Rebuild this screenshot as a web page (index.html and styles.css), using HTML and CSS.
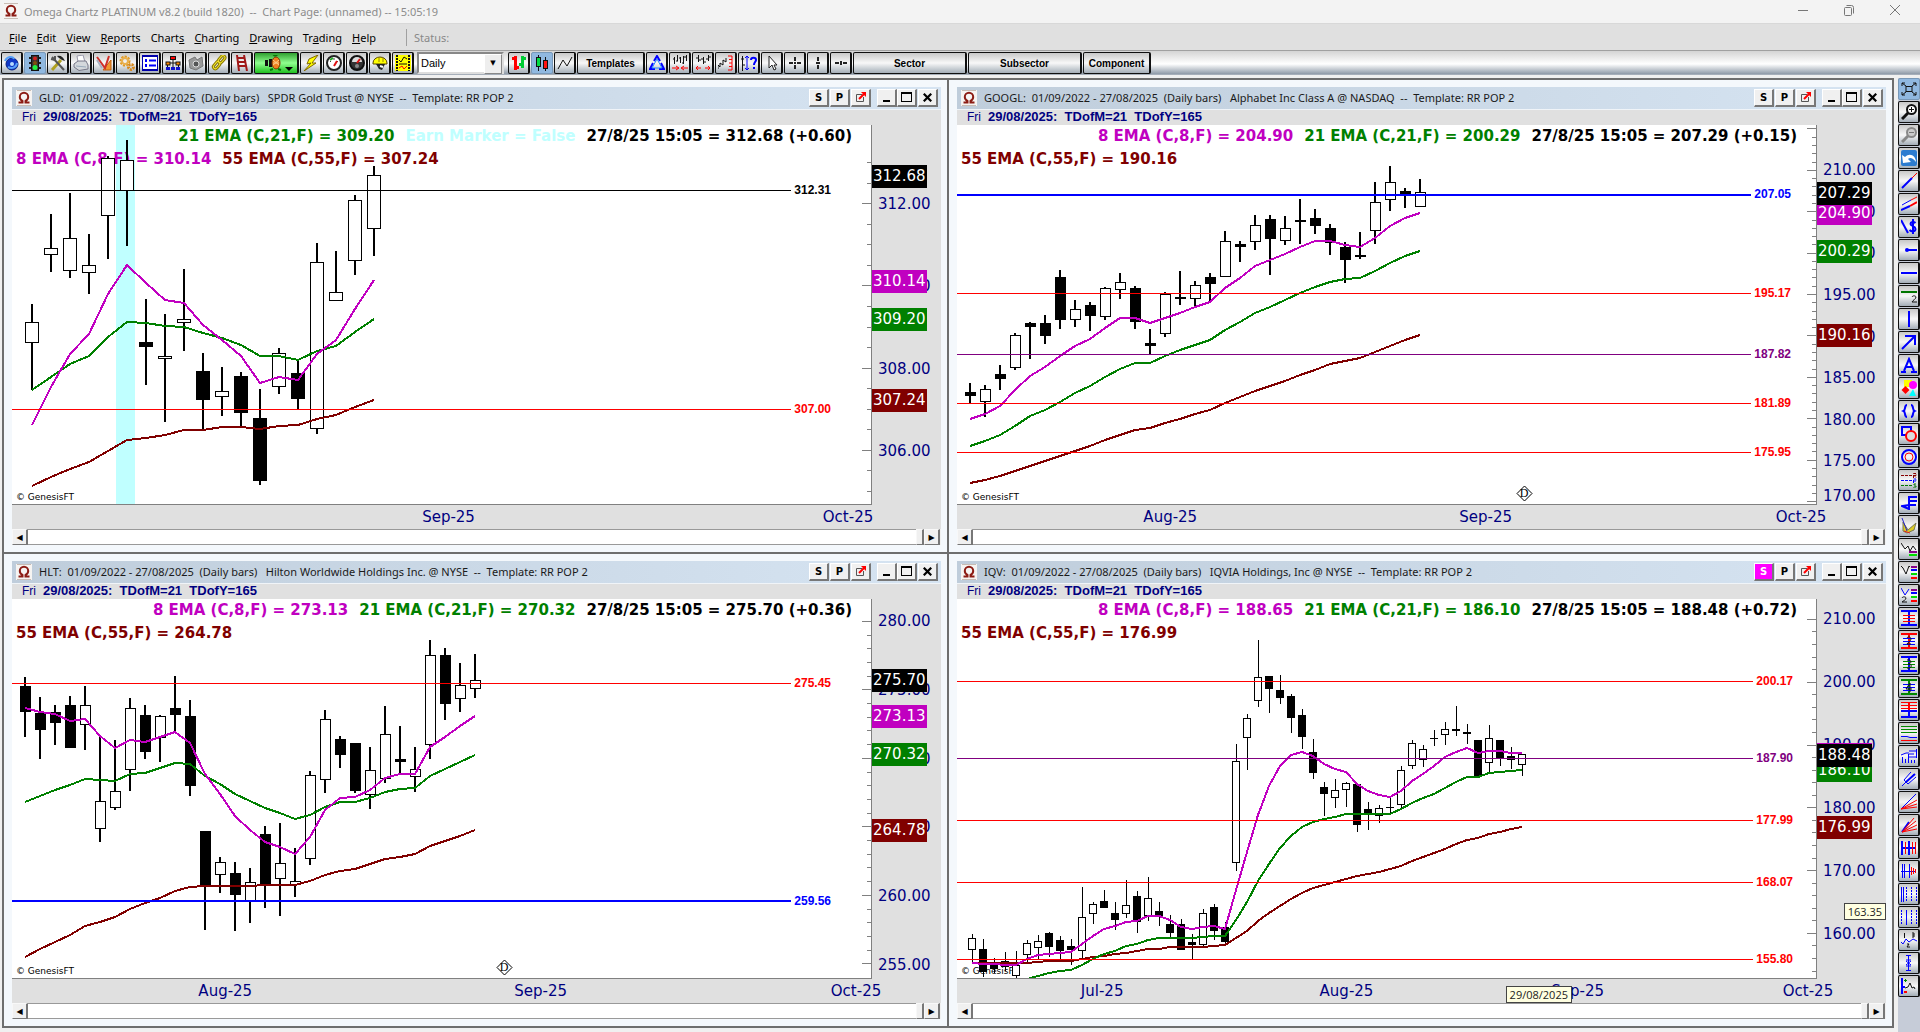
FILE: index.html
```html
<!DOCTYPE html>
<html lang="en">
<head>
    <meta charset="UTF-8">
    <meta name="viewport" content="width=device-width, initial-scale=1.0">
    <title>Omega Chartz PLATINUM</title>
    <link rel="stylesheet" href="styles.css">
</head>
<body>
    <svg class="defs" aria-hidden="true">
        <symbol id="omega" viewBox="0 0 16 16">
            <rect width="16" height="16" fill="#f6f4f2"/>
            <path d="M1 .5h14M1 15.500h14" stroke="#c8bcb4"/>
            <path d="M2.500 12.500h4v-1.500C4.500 10 3.800 8.500 3.800 7a4.200 4.200 0 0 1 8.400 0c0 1.500-.7 3-2.700 4v1.500h4" fill="none" stroke="#8c1c14" stroke-width="2"/>
        </symbol>
        <symbol id="popout" viewBox="0 0 12 12">
            <path d="M7 3.500H1.500v7h7V6" fill="none" stroke="#555"/>
            <path d="M4 8l5-5" stroke="#f00" stroke-width="2"/>
            <path d="M6 1h5v5z" fill="#f00"/>
        </symbol>
    </svg>

    <header class="app-title">
        <svg class="app-icon"><use href="#omega"/></svg>
        <h1>Omega Chartz PLATINUM v8.2 (build 1820)  --  Chart Page: (unnamed) -- 15:05:19</h1>
        <div class="window-buttons">
            <button aria-label="Minimize"><svg viewBox="0 0 12 12"><path d="M1 6.500h10"/></svg></button>
            <button aria-label="Restore"><svg viewBox="0 0 12 12"><rect x="1.500" y="3.500" width="7" height="8" rx="1"/><path d="M3.500 1.500h5a2 2 0 0 1 2 2v6"/></svg></button>
            <button aria-label="Close"><svg viewBox="0 0 12 12"><path d="M1 1l10 10M11 1L1 11"/></svg></button>
        </div>
    </header>

    <nav class="menu">
        <button><u>F</u>ile</button>
        <button><u>E</u>dit</button>
        <button><u>V</u>iew</button>
        <button><u>R</u>eports</button>
        <button>Chart<u>s</u></button>
        <button><u>C</u>harting</button>
        <button><u>D</u>rawing</button>
        <button>Tr<u>a</u>ding</button>
        <button><u>H</u>elp</button>
        <span class="status">Status:</span>
    </nav>

    <div class="toolbar">
        <button class="tool" aria-label="Phone"><svg viewBox="0 0 16 16"><circle cx="8" cy="9" r="6" fill="#1038c8" stroke="#0a2080" stroke-width="1"/><path d="M1 6c2-5 8-5 9-2M4 12c4 2 8 1 9-4" stroke="#58a0f8"/><circle cx="8" cy="9" r="2" fill="#b8dcff" stroke="none"/></svg></button>
        <button class="tool active" aria-label="Traffic light"><svg viewBox="0 0 16 16"><path d="M2 3h12M2 8h12M2 13h12" stroke="#222"/><rect x="4.500" y=".5" width="7" height="15" fill="#333" stroke="#111" stroke-width="1"/><circle cx="8" cy="3.500" r="2" fill="#d02020" stroke="none"/><circle cx="8" cy="8" r="2" fill="#805010" stroke="none"/><circle cx="8" cy="12.500" r="2.500" fill="#20f040" stroke="none"/></svg></button>
        <button class="tool" aria-label="Tools"><svg viewBox="0 0 16 16"><path d="M2 15L11 5" stroke="#b0a020" stroke-width="3"/><path d="M7 1c4-1 6 1 8 5l-3-1-3-2z" fill="#222" stroke="none"/><path d="M2 2l12 13" stroke="#555"/><path d="M1 4l4 1V1" stroke="#555"/></svg></button>
        <button class="tool" aria-label="Print"><svg viewBox="0 0 16 16"><path d="M4 1l6-1 2 7H5z" fill="#fff" stroke="#99a" stroke-width="1"/><path d="M1 9l4-3h8l2 4v4l-9 1.500L1 12z" fill="#d4d8dc" stroke="#778" stroke-width="1"/><path d="M3 11l10 1" stroke="#9ab" stroke-width="1"/></svg></button>
        <button class="tool" aria-label="Drawing tools"><svg viewBox="0 0 16 16"><path d="M7 15l8-10v10z" fill="#f09830" stroke="#c06010" stroke-width="1"/><path d="M1 2l8 11L13 1" stroke="#d03028" stroke-width="2"/><path d="M1 5l5 8" stroke="#a8b0c0"/></svg></button>
        <button class="tool" aria-label="Settings"><svg viewBox="0 0 16 16"><circle cx="6" cy="6" r="4" stroke="#e09820" stroke-width="3" stroke-dasharray="2 1"/><circle cx="6" cy="6" r="3" stroke="#e8b050"/><circle cx="12" cy="12" r="2.500" stroke="#d88818" stroke-width="3" stroke-dasharray="2 1"/></svg></button>
        <button class="tool" aria-label="List"><svg viewBox="0 0 16 16"><rect x="0" y="1" width="16" height="14" fill="#fff" stroke="#00a" stroke-width="2"/><path d="M7 5.500h7M7 10.500h7"/><path d="M3 5.500h2M3 10.500h2" stroke-width="3"/></svg></button>
        <button class="tool" aria-label="Tree"><svg viewBox="0 0 16 16"><path d="M8 4v4M2.500 12V8h11v4M8 8v4" stroke="#111" stroke-width="1"/><rect x="5.500" y="1.500" width="5" height="3" fill="#f00" stroke="#111" stroke-width="1"/><rect x="1" y="7" width="4" height="3" fill="#f80" stroke="#111" stroke-width="1"/><rect x="11" y="7" width="4" height="3" fill="#f80" stroke="#111" stroke-width="1"/><path d="M1 13.500h4M6 13.500h4M11 13.500h4" stroke="#11c" stroke-width="3"/></svg></button>
        <button class="tool" aria-label="Camera"><svg viewBox="0 0 16 16"><path d="M1 5l6-3 2 3 5-3 1 9-7 4-6-2z" fill="#999" stroke="#777" stroke-width="1"/><circle cx="8" cy="9" r="3" fill="#555" stroke="#ddd" stroke-width="1"/></svg></button>
        <button class="tool" aria-label="Link"><svg viewBox="0 0 16 16"><rect x="-3" y="-2" width="8" height="4" rx="2" transform="translate(5 11) rotate(-50)" stroke="#887800" stroke-width="3"/><rect x="-3" y="-2" width="8" height="4" rx="2" transform="translate(10 5) rotate(-50)" stroke="#887800" stroke-width="3"/><rect x="-3" y="-2" width="8" height="4" rx="2" transform="translate(5 11) rotate(-50)" stroke="#f8e830" stroke-width="1"/><rect x="-3" y="-2" width="8" height="4" rx="2" transform="translate(10 5) rotate(-50)" stroke="#f8e830" stroke-width="1"/></svg></button>
        <button class="tool" aria-label="Ladder"><svg viewBox="0 0 16 16"><path d="M3 0l2 16M10 0l3 16M3 3h7M4 7h7M4 11h8" stroke="#a01818"/></svg></button>
        <button class="tool go" aria-label="Run"><svg viewBox="0 0 34 16"><rect x="6" y="5" width="3" height="6" fill="#111" stroke="none"/><rect x="10" y="4" width="3" height="8" fill="#111" stroke="none"/><path d="M16 1l-2-2M16 1l3-2M14 14l-3 1M19 14l3 1" stroke="#067806"/><ellipse cx="17" cy="8" rx="4" ry="6" fill="#f08020" stroke="#803000" stroke-width="1"/><path d="M14 5l6 5M14 10l6-5M14 8h6" stroke="#fc8" stroke-width="1"/><path d="M26 12h8l-4 4z" fill="#000" stroke="none"/></svg></button>
        <button class="tool" aria-label="Lightning"><svg viewBox="0 0 16 16"><path d="M15 0L6 4 4 9l4-1-7 8L13 8 9 8z" fill="#ff0" stroke="#806800" stroke-width="1"/></svg></button>
        <button class="tool" aria-label="Gauge"><svg viewBox="0 0 16 16"><circle cx="8" cy="8" r="7" fill="#fff" stroke="#222"/><path d="M4 6l1 1M8 3v2M12 6l-1 1" stroke="#444" stroke-width="1"/><path d="M8 11l3-5" stroke="#e01010"/><path d="M4 5l3-2" stroke="#2a2"/></svg></button>
        <button class="tool" aria-label="Dark gauge"><svg viewBox="0 0 16 16"><circle cx="8" cy="8" r="7" fill="#333" stroke="#111"/><path d="M3 7a5 5 0 0 1 10 0z" fill="#ddd" stroke="none"/><path d="M8 8l3-4" stroke="#e01010"/><circle cx="8" cy="11" r="2" fill="#888" stroke="none"/></svg></button>
        <button class="tool" aria-label="Helmet"><svg viewBox="0 0 16 16"><path d="M1 8a7 6 0 0 1 14 0v1H1z" fill="#ff0" stroke="#554400" stroke-width="1"/><path d="M7 2v5M11 3v4" stroke="#998800" stroke-width="1"/><path d="M4 9h9l-3 6-3-1z" fill="#222" stroke="none"/><path d="M8 11l3 1" stroke="#fff"/></svg></button>
        <button class="tool" aria-label="Film"><svg viewBox="0 0 16 16"><rect width="16" height="16" fill="#ff0" stroke="none"/><path d="M2 0v16M14 0v16" stroke="#111" stroke-dasharray="2 1"/><path d="M4 5l2 2 3-5 3 2M4 9h8" stroke="#111" stroke-width="1"/><path d="M4 13l3-2 2 3 3-3" stroke="#f00" stroke-width="1"/></svg></button>
        <label class="period"><select aria-label="Bar period"><option>Daily</option><option>Weekly</option><option>Monthly</option></select></label>
        <button class="tool" aria-label="OHLC bars"><svg viewBox="0 0 16 16"><path d="M4.500 1v14M1 3.500h3M4 12.500h4" stroke="#f00" stroke-width="3"/><path d="M11.500 1v12M8 9.500h4M11 3.500h4" stroke="#0c3" stroke-width="3"/></svg></button>
        <button class="tool active" aria-label="Candles"><svg viewBox="0 0 16 16"><path d="M4.500 0v16M11.500 2v14" stroke="#111" stroke-width="1"/><rect x="2.500" y="2.500" width="4" height="9" fill="#0d4" stroke="#111" stroke-width="1"/><rect x="9.500" y="5.500" width="4" height="8" fill="#f11" stroke="#111" stroke-width="1"/></svg></button>
        <button class="tool" aria-label="Line chart"><svg viewBox="0 0 16 16"><path d="M1 14l5-9 4 6 5-9" stroke="#111" stroke-width="1"/></svg></button>
        <button class="tool templates">Templates</button>
        <button class="tool" aria-label="Recycle"><svg viewBox="0 0 16 16"><path d="M5 6l3-5 3 5M12 8l3 6h-5M6 14H1l3-6" stroke="#00f" stroke-width="2"/><path d="M8 4L3 13h10z" stroke="#28f" stroke-width="1"/></svg></button>
        <button class="tool" aria-label="Compress bars"><svg viewBox="0 0 16 16"><path d="M2.500 2v7M5.500 0v6M8.500 2v6M11.500 1v8M14.500 0v6M1 4h1M4 6h2M7 3h2M10 8h1M12 2h2" stroke="#111" stroke-width="1"/><path d="M0 13h6M16 13h-6M4 11l3 2-3 2M12 11l-3 2 3 2" stroke="#f00" stroke-width="1"/></svg></button>
        <button class="tool" aria-label="Expand bars"><svg viewBox="0 0 16 16"><path d="M3.500 0v7M8.500 2v7M13.500 0v6M1 3h2M4 5h2M6 4h2M9 7h2M11 4h2M14 2h2" stroke="#111" stroke-width="1"/><path d="M1 13h5M15 13h-5M3 11l-2 2 2 2M13 11l2 2-2 2" stroke="#f00" stroke-width="1"/></svg></button>
        <button class="tool" aria-label="Scale"><svg viewBox="0 0 16 16"><path d="M0 14v-4l2 2V8l3 2V5l3 2V3" stroke="#111" stroke-width="1"/><path d="M10 1h4v14h-4M11 4.500h3M11 8h3M11 11.500h3" stroke="#f00" stroke-width="1"/></svg></button>
        <button class="tool" aria-label="Help with bars"><svg viewBox="0 0 16 16"><path d="M1.500 1v15M0 4h3M1 10h3" stroke="#111" stroke-width="1"/><path d="M6 1v14M4 3l2-2 2 2M4 13l2 2 2-2" stroke-width="1"/><path d="M10 5c0-3 5-3 5 0 0 2-2 2-2 5M13 12v2"/></svg></button>
        <button class="tool" aria-label="Pointer"><svg viewBox="0 0 16 16"><path d="M5 1v12l3-3 2 5 2-1-2-4h3z" fill="#fff" stroke="#222" stroke-width="1"/></svg></button>
        <button class="tool" aria-label="Crosshair"><svg viewBox="0 0 16 16"><path d="M8 2v4M8 10v4M2 8h4M10 8h4" stroke="#222"/><rect x="7" y="7" width="2" height="2" fill="#222" stroke="none"/></svg></button>
        <button class="tool" aria-label="Vertical cursor"><svg viewBox="0 0 16 16"><path d="M8 2v4M8 10v4" stroke="#222"/><rect x="6" y="7" width="4" height="2" fill="#222" stroke="none"/></svg></button>
        <button class="tool" aria-label="Horizontal cursor"><svg viewBox="0 0 16 16"><path d="M2 8h4M10 8h4" stroke="#222"/><rect x="7" y="6" width="2" height="4" fill="#222" stroke="none"/></svg></button>
        <button class="tool sector">Sector</button>
        <button class="tool sector">Subsector</button>
        <button class="tool templates">Component</button>
    </div>

    <div class="desk">
        <main class="workspace">
            <section class="panel">
                <div class="panel-title">
                    <svg class="app-icon"><use href="#omega"/></svg>
                    <h2>GLD:  01/09/2022 - 27/08/2025  (Daily bars)   SPDR Gold Trust @ NYSE  --  Template: RR POP 2</h2>
                    <button>S</button><button>P</button><button aria-label="Pop out"><svg><use href="#popout"/></svg></button>
                    <button class="min" aria-label="Minimize"><i></i></button><button class="max" aria-label="Maximize"><i></i></button><button class="close" aria-label="Close"><svg viewBox="0 0 12 12"><path d="M1 1l10 10M11 1L1 11"/></svg></button>
                </div>
                <div class="panel-info"><span>Fri</span><b>29/08/2025:  TDofM=21  TDofY=165</b></div>
                <div class="chart" id="gld">
                    <div class="plot">
                        <div class="legend">
                            <div class="row first"><span class="ema21">21 EMA (C,21,F) = 309.20</span><span class="earn">Earn Marker = False</span><span>27/8/25 15:05 = 312.68 (+0.60)</span></div>
                            <div class="row"><span class="ema8">8 EMA (C,8,F) = 310.14</span><span class="ema55">55 EMA (C,55,F) = 307.24</span></div>
                        </div>
                        <small>© GenesisFT</small>
                    </div>
                    <div class="axis"></div>
                </div>
                <div class="months"></div>
                <div class="scroll"><button aria-label="Scroll left">◀</button><div class="track"></div><div class="thumb"></div><button aria-label="Scroll right">▶</button></div>
            </section>

            <section class="panel">
                <div class="panel-title">
                    <svg class="app-icon"><use href="#omega"/></svg>
                    <h2>GOOGL:  01/09/2022 - 27/08/2025  (Daily bars)   Alphabet Inc Class A @ NASDAQ  --  Template: RR POP 2</h2>
                    <button>S</button><button>P</button><button aria-label="Pop out"><svg><use href="#popout"/></svg></button>
                    <button class="min" aria-label="Minimize"><i></i></button><button class="max" aria-label="Maximize"><i></i></button><button class="close" aria-label="Close"><svg viewBox="0 0 12 12"><path d="M1 1l10 10M11 1L1 11"/></svg></button>
                </div>
                <div class="panel-info"><span>Fri</span><b>29/08/2025:  TDofM=21  TDofY=165</b></div>
                <div class="chart" id="googl">
                    <div class="plot">
                        <div class="legend">
                            <div class="row first"><span class="ema8">8 EMA (C,8,F) = 204.90</span><span class="ema21">21 EMA (C,21,F) = 200.29</span><span>27/8/25 15:05 = 207.29 (+0.15)</span></div>
                            <div class="row"><span class="ema55">55 EMA (C,55,F) = 190.16</span></div>
                        </div>
                        <small>© GenesisFT</small>
                    </div>
                    <div class="axis"></div>
                </div>
                <div class="months"></div>
                <div class="scroll"><button aria-label="Scroll left">◀</button><div class="track"></div><div class="thumb"></div><button aria-label="Scroll right">▶</button></div>
            </section>

            <section class="panel">
                <div class="panel-title">
                    <svg class="app-icon"><use href="#omega"/></svg>
                    <h2>HLT:  01/09/2022 - 27/08/2025  (Daily bars)   Hilton Worldwide Holdings Inc. @ NYSE  --  Template: RR POP 2</h2>
                    <button>S</button><button>P</button><button aria-label="Pop out"><svg><use href="#popout"/></svg></button>
                    <button class="min" aria-label="Minimize"><i></i></button><button class="max" aria-label="Maximize"><i></i></button><button class="close" aria-label="Close"><svg viewBox="0 0 12 12"><path d="M1 1l10 10M11 1L1 11"/></svg></button>
                </div>
                <div class="panel-info"><span>Fri</span><b>29/08/2025:  TDofM=21  TDofY=165</b></div>
                <div class="chart" id="hlt">
                    <div class="plot">
                        <div class="legend">
                            <div class="row first"><span class="ema8">8 EMA (C,8,F) = 273.13</span><span class="ema21">21 EMA (C,21,F) = 270.32</span><span>27/8/25 15:05 = 275.70 (+0.36)</span></div>
                            <div class="row"><span class="ema55">55 EMA (C,55,F) = 264.78</span></div>
                        </div>
                        <small>© GenesisFT</small>
                    </div>
                    <div class="axis"></div>
                </div>
                <div class="months"></div>
                <div class="scroll"><button aria-label="Scroll left">◀</button><div class="track"></div><div class="thumb"></div><button aria-label="Scroll right">▶</button></div>
            </section>

            <section class="panel">
                <div class="panel-title">
                    <svg class="app-icon"><use href="#omega"/></svg>
                    <h2>IQV:  01/09/2022 - 27/08/2025  (Daily bars)   IQVIA Holdings, Inc @ NYSE  --  Template: RR POP 2</h2>
                    <button class="synced">S</button><button>P</button><button aria-label="Pop out"><svg><use href="#popout"/></svg></button>
                    <button class="min" aria-label="Minimize"><i></i></button><button class="max" aria-label="Maximize"><i></i></button><button class="close" aria-label="Close"><svg viewBox="0 0 12 12"><path d="M1 1l10 10M11 1L1 11"/></svg></button>
                </div>
                <div class="panel-info"><span>Fri</span><b>29/08/2025:  TDofM=21  TDofY=165</b></div>
                <div class="chart" id="iqv">
                    <div class="plot">
                        <div class="legend">
                            <div class="row first"><span class="ema8">8 EMA (C,8,F) = 188.65</span><span class="ema21">21 EMA (C,21,F) = 186.10</span><span>27/8/25 15:05 = 188.48 (+0.72)</span></div>
                            <div class="row"><span class="ema55">55 EMA (C,55,F) = 176.99</span></div>
                        </div>
                        <small>© GenesisFT</small>
                    </div>
                    <div class="axis"></div>
                </div>
                <div class="months"></div>
                <div class="scroll"><button aria-label="Scroll left">◀</button><div class="track"></div><div class="thumb"></div><button aria-label="Scroll right">▶</button></div>
            </section>
        </main>

        <aside class="draw-tools">
            <button class="tool active" aria-label="Fit"><svg viewBox="0 0 16 16"><rect x="5" y="5.500" width="6" height="5" stroke="#111" stroke-width="1"/><path d="M1 5V2h3M12 2h3v3M15 11v3h-3M4 14H1v-3M1 2l4 3M15 2l-4 3M1 14l4-3M15 14l-4-3" stroke="#111" stroke-width="1"/></svg></button>
            <button class="tool" aria-label="Zoom in"><svg viewBox="0 0 16 16"><path d="M1 15l6-6" stroke="#111" stroke-width="3"/><circle cx="10.500" cy="5.500" r="4.500" fill="#fff" stroke="#111"/><path d="M8 5.500h5M10.500 3v5" stroke="#111" stroke-width="1"/></svg></button>
            <button class="tool" aria-label="Zoom out"><svg viewBox="0 0 16 16"><path d="M1 15l6-6" stroke="#888" stroke-width="3"/><circle cx="10.500" cy="5.500" r="4.500" fill="#ccc" stroke="#888"/><path d="M8 5.500h5" stroke="#777" stroke-width="1"/></svg></button>
            <button class="tool" aria-label="Undo zoom"><svg viewBox="0 0 16 16"><rect width="16" height="16" rx="2" fill="#2c7cd0" stroke="none"/><path d="M1 5l1 8 8-1-3-3c2-2 5-1 8 3 0-6-6-10-11-5z" fill="#fff" stroke="none"/></svg></button>
            <button class="tool" aria-label="Trend line"><svg viewBox="0 0 16 16"><path d="M1 15L11 5"/><path d="M11 5l5-5" stroke="#f00" stroke-width="1"/></svg></button>
            <button class="tool" aria-label="Parallel lines"><svg viewBox="0 0 16 16"><path d="M0 14l9-4"/><path d="M9 10l7-4" stroke="#f00"/><path d="M1 9l9-5" stroke-width="1"/><path d="M10 4l6-3" stroke="#f00" stroke-width="1"/></svg></button>
            <button class="tool" aria-label="Dollar line"><svg viewBox="0 0 16 16"><path d="M0 1l7 13"/><path d="M14.500 4c-2-2-5-1-5 1s5 2 5 5-4 3-6 1M12 0v15" stroke-width="2"/></svg></button>
            <button class="tool" aria-label="Ray"><svg viewBox="0 0 16 16"><path d="M5 8h11"/><circle cx="6" cy="8" r="2" fill="#00f" stroke="none"/></svg></button>
            <button class="tool" aria-label="Horizontal line"><svg viewBox="0 0 16 16"><path d="M0 8h16"/></svg></button>
            <button class="tool" aria-label="Second horizontal line"><svg viewBox="0 0 16 16"><path d="M0 4h16" stroke="#070"/><path d="M11 9c1-2 4-1 4 0 0 2-3 3-4 5h5" stroke="#111" stroke-width="1"/></svg></button>
            <button class="tool" aria-label="Vertical line"><svg viewBox="0 0 16 16"><path d="M8 0v16"/></svg></button>
            <button class="tool" aria-label="Arrow"><svg viewBox="0 0 16 16"><path d="M1 15L13 3M4 2h10v9"/></svg></button>
            <button class="tool" aria-label="Text"><svg viewBox="0 0 16 16"><path d="M3 14L8 2l5 12M5 10h6M0 15h5M10 15h6"/></svg></button>
            <button class="tool" aria-label="Shapes"><svg viewBox="0 0 16 16"><rect x="3" y="0" width="8" height="7" fill="#ff0" stroke="none"/><circle cx="12" cy="5" r="4" fill="#f0f" stroke="none"/><path d="M4.500 6l4 4-4 4-4-4z" fill="#f00" stroke="none"/><path d="M12 9l3 7H8z" fill="#0ff" stroke="none"/></svg></button>
            <button class="tool" aria-label="Braces"><svg viewBox="0 0 16 16"><path d="M6 2C3 2 5 7 2.500 8 5 9 3 14 6 14M10 2c3 0 1 5 3.500 6C11 9 13 14 10 14"/></svg></button>
            <button class="tool" aria-label="Square and circle"><svg viewBox="0 0 16 16"><rect x="1" y="1" width="9" height="8"/><circle cx="10" cy="10" r="5" fill="#ddd" stroke="#f00"/></svg></button>
            <button class="tool" aria-label="Circles"><svg viewBox="0 0 16 16"><circle cx="8" cy="8" r="7"/><circle cx="8" cy="8" r="4" stroke="#f00" stroke-width="1"/></svg></button>
            <button class="tool" aria-label="Support and resistance"><svg viewBox="0 0 16 16"><g stroke-width="1"><path d="M0 3.500h11M12.500 6V1.500H15v2h-2l2 2" stroke="#800" stroke-dasharray="3 1"/><path d="M0 8.500h11M12.500 11V7H15v2h-2" stroke-dasharray="3 1"/><path d="M0 13.500h11M15 12h-2v2h2v2h-3" stroke="#070" stroke-dasharray="3 1"/></g></svg></button>
            <button class="tool" aria-label="Steps"><svg viewBox="0 0 16 16"><path d="M8 15V2h8M8 6h8M8 10h7M8 10l-7 1 7 3"/></svg></button>
            <button class="tool" aria-label="Fan"><svg viewBox="0 0 16 16"><path d="M2 4l5 8 8-7-2 7-7 3-4-2z" fill="#dc2" stroke="#775" stroke-width="1"/><path d="M1 0l5 13" stroke="#22c" stroke-width="1"/><path d="M3 13l6 2" stroke="#d22" stroke-width="1"/></svg></button>
            <button class="tool" aria-label="Wave levels 1"><svg viewBox="0 0 16 16"><path d="M0 2l4 6 3-3 2 5 3-5 3 4" stroke="#111" stroke-width="1"/><path d="M8 11h8" stroke="#808"/><path d="M8 14h8" stroke="#0d0"/></svg></button>
            <button class="tool" aria-label="Wave levels 2"><svg viewBox="0 0 16 16"><path d="M0 2l2 2 3 6 3-8 1 1" stroke="#111" stroke-width="1"/><path d="M10 3h6" stroke="#808"/><path d="M10 6h6"/><path d="M10 10h6" stroke="#0d0"/><path d="M10 14h6" stroke="#f00"/></svg></button>
            <button class="tool" aria-label="Wave levels 3"><svg viewBox="0 0 16 16"><path d="M0 1l4 7 4-6" stroke-width="1"/><path d="M1 11c1-2 4-1 4 0 0 2-3 3-4 4h5" stroke="#111" stroke-width="1"/><path d="M10 3h6" stroke="#808"/><path d="M10 6h6"/><path d="M10 10h6" stroke="#0d0"/><path d="M10 14h6" stroke="#f00"/></svg></button>
            <button class="tool" aria-label="Retracement 1"><svg viewBox="0 0 16 16"><path d="M0 1h16M0 15h16M8 1v14"/><path d="M2 5.500h12M2 8.500h12M2 11.500h12" stroke="#f00" stroke-width="1"/></svg></button>
            <button class="tool" aria-label="Retracement 2"><svg viewBox="0 0 16 16"><path d="M0 1h16M0 15h16M8 1v14" stroke="#f00"/><path d="M2 5.500h12M2 8.500h12M2 11.500h12" stroke-width="1"/><path d="M6 5c1-2 4-1 4 1s-3 3-4 5h4" stroke="#111" stroke-width="1"/></svg></button>
            <button class="tool" aria-label="Retracement 3"><svg viewBox="0 0 16 16"><path d="M0 1h16M0 15h16M8 1v14"/><path d="M2 5.500h12M2 8.500h12M2 11.500h12" stroke="#080" stroke-width="1"/><path d="M6 4c5-1 5 4 1 4 5 0 4 5-1 4" stroke="#111" stroke-width="1"/></svg></button>
            <button class="tool" aria-label="Retracement 4"><svg viewBox="0 0 16 16"><path d="M0 1h16M0 15h16M8 1v14" stroke="#080"/><path d="M2 5.500h12M2 8.500h12M2 11.500h12" stroke-width="1"/><path d="M9 13V4L5 10h6" stroke="#111" stroke-width="1"/></svg></button>
            <button class="tool" aria-label="Extension"><svg viewBox="0 0 16 16"><path d="M0 .5h16M0 3.500h16M0 6.500h16" stroke="#f00" stroke-width="1"/><path d="M8 1v8" stroke="#f00"/><path d="M0 9h16M0 15h16M8 9v6"/></svg></button>
            <button class="tool" aria-label="Bands"><svg viewBox="0 0 16 16"><g stroke-width="1"><path d="M0 1.500h16M0 4.500h16M0 7.500h16" stroke="#080"/><path d="M0 11.500h6l3 1h7"/><path d="M0 15.500h16" stroke="#f00"/></g></svg></button>
            <button class="tool" aria-label="Volume profile"><svg viewBox="0 0 16 16"><path d="M1.500 15V9M4.500 15v-4M7.500 15V6M10.500 15v-3M13.500 15v-3M0 7l5-2h3M8 3h8M8 6h5M8 9h8M15.500 1v9" stroke-width="1"/></svg></button>
            <button class="tool" aria-label="Pitchfork"><svg viewBox="0 0 16 16"><path d="M1 15L13 3M3 9l7-8M7 13l8-7M3 9l4 4" stroke-width="1"/><path d="M5 11L14 3"/></svg></button>
            <button class="tool" aria-label="Speed lines"><svg viewBox="0 0 16 16"><g stroke-width="1"><path d="M0 15L15 0"/><path d="M0 15l16-9M0 15l16-5M0 15l16-2" stroke="#f00"/></g></svg></button>
            <button class="tool" aria-label="Gann fan"><svg viewBox="0 0 16 16"><path d="M1 15L8 5"/><g stroke-width="1" stroke="#f00"><path d="M1 15L13 1M1 15l14-11M1 15l15-7M1 15l15-3"/></g></svg></button>
            <button class="tool" aria-label="Time zones 1"><svg viewBox="0 0 16 16"><path d="M1 1v14M8 1v14M1 8h14"/><path d="M4.500 2v12M11.500 2v12M14.500 2v12" stroke="#f00" stroke-width="1"/></svg></button>
            <button class="tool" aria-label="Time zones 2"><svg viewBox="0 0 16 16"><path d="M1.500 1v14M3.500 1v14M8.500 1v14M0 8.500h15" stroke-width="1"/><path d="M10.500 4v8M12.500 5v6M14.500 6v4" stroke="#f00" stroke-width="1"/></svg></button>
            <button class="tool" aria-label="Cycles 1"><svg viewBox="0 0 16 16"><path d="M.5 1v15M2.500 1v15" stroke-width="1"/><path d="M5.500 1v15M10.500 1v15M15.500 1v15" stroke-width="1" stroke-dasharray="2 1"/></svg></button>
            <button class="tool" aria-label="Cycles 2"><svg viewBox="0 0 16 16"><path d="M5.500 1v15" stroke-width="1"/><path d="M.5 1v15M10.500 1v15M15.500 1v15" stroke-width="1" stroke-dasharray="2 1"/></svg></button>
            <button class="tool" aria-label="Wave count"><svg viewBox="0 0 16 16"><path d="M0 10l2 2 3-5 3 3 4-3 4 2" stroke-width="1"/><path d="M3.500 1v5M11 1h2v4h-2M11 3h2M6 12h2l-2 3h3" stroke="#111" stroke-width="1"/></svg></button>
            <button class="tool" aria-label="Measure"><svg viewBox="0 0 16 16"><path d="M7.500 0v16M5 .5h5M5 15.500h5M5 6l5 4M10 6l-5 4M5 5h5M5 11h5" stroke-width="1"/></svg></button>
            <button class="tool" aria-label="Gain and loss"><svg viewBox="0 0 16 16"><path d="M1 0v16M0 9h4"/><path d="M4 10l3-1 2-4 2 5 2-1 1 2" stroke="#111" stroke-width="1"/><path d="M3 2.500h3M4.500 1v3" stroke="#080" stroke-width="1"/><path d="M3 14h3" stroke="#f00"/></svg></button>
        </aside>
    </div>

    <script src="script.js"></script>
</body>
</html>
```

FILE: styles.css
```css
* {
    box-sizing: border-box;
}
body {
    margin: 0;
    height: 100vh;
    display: flex;
    flex-direction: column;
    overflow: hidden;
    background-color: #f0f0f0;
    color: #000;
    font-family: "Segoe UI", "Noto Sans", sans-serif;
    font-size: 11px;
}
button {
    margin: 0;
    padding: 0;
    border: none;
    background: none;
    color: inherit;
    font: inherit;
}
h1, h2 {
    margin: 0;
    font-size: inherit;
    font-weight: normal;
}
.defs {
    position: absolute;
    width: 0;
    height: 0;
}

/* title and menu */
.app-title {
    height: 24px;
    flex: none;
    display: flex;
    align-items: center;
    padding: 0 2px 1px 3px;
    background-color: #f3f3f3;
    border-bottom: 1px solid #d8d8d8;
    color: #8c8c8c;
}
.app-title h1 {
    flex: 1;
    margin-left: 5px;
    white-space: pre;
}
.app-icon {
    width: 16px;
    height: 16px;
    flex: none;
}
.window-buttons {
    display: flex;
}
.window-buttons button {
    width: 46px;
    height: 20px;
}
.window-buttons svg {
    width: 12px;
    height: 12px;
    fill: none;
    stroke: #777;
}
.menu {
    height: 27px;
    flex: none;
    display: flex;
    align-items: center;
    gap: 10px;
    padding-left: 9px;
    background-color: #e0e0e0;
    border-bottom: 1px solid #a0a0a0;
}
.status {
    margin-left: 20px;
    padding: 1px 7px;
    border-left: 1px solid #a0a0a0;
    color: #888;
}

/* tool buttons, shared by the top bar and the drawing bar */
.toolbar {
    height: 27px;
    flex: none;
    display: flex;
    align-items: flex-start;
    gap: 1px;
    padding: 1px;
    background: linear-gradient(#d4d4d4, #fff 48%, #8c98a6 86%, #f0f0f0 90%);
}
.tool {
    width: 22px;
    height: 22px;
    flex: none;
    display: flex;
    align-items: center;
    justify-content: center;
    border: 1px solid #101010;
    border-right-width: 2px;
    border-radius: 2px;
    background: linear-gradient(#c8c8c8, #f8f8f8 50%, #a4aeb8);
    font: bold 10px "Liberation Sans", Arial, sans-serif;
}
.tool svg {
    width: 16px;
    height: 16px;
    flex: none;
    fill: none;
    stroke: #00f;
    stroke-width: 2;
}
.tool.active {
    border: 1px solid #7898b8;
    background: #90b8e0;
}
.tool.go {
    width: 45px;
    background: linear-gradient(#30a030, #90ff90 50%, #20c020);
}
.tool.go svg {
    width: 34px;
}
.tool.templates {
    width: 68px;
}
.tool.sector {
    width: 114px;
}
.period {
    position: relative;
    margin: 0 3px 0 2px;
}
.period select {
    width: 87px;
    height: 22px;
    padding: 0 2px;
    border: 2px solid #888;
    border-right-color: #ddd;
    border-bottom-color: #ddd;
    border-radius: 0;
    background-color: #fff;
    appearance: none;
    font: 11px "Liberation Sans", Arial, sans-serif;
}
.period::after {
    content: "▼";
    position: absolute;
    top: 2px;
    right: 2px;
    width: 16px;
    height: 18px;
    border: 1px solid #888;
    border-top-color: #fff;
    border-left-color: #fff;
    background-color: #eee;
    font: 7px/17px "DejaVu Sans", sans-serif;
    text-align: center;
    pointer-events: none;
}

/* desk */
.desk {
    flex: 1;
    min-height: 0;
    display: flex;
    padding-left: 2px;
}
.workspace {
    flex: 1;
    min-width: 0;
    margin-bottom: 4px;
    display: grid;
    grid-template-columns: 1fr 1fr;
    grid-template-rows: 1fr 1fr;
    border-right: 2px solid #6e6e6e;
    border-bottom: 2px solid #6e6e6e;
}
.draw-tools {
    display: flex;
    flex-direction: column;
    gap: 1px;
    margin-left: 4px;
    background-color: #c6ccd8;
}

/* chart panels */
.panel {
    position: relative;
    min-width: 0;
    min-height: 0;
    display: flex;
    flex-direction: column;
    padding: 7px 6px 7px 8px;
    border-top: 2px solid #6e6e6e;
    border-left: 2px solid #6e6e6e;
    background-color: #f4f8fc;
}
.panel-title {
    height: 23px;
    flex: none;
    display: flex;
    align-items: center;
    padding: 0 3px 1px 4px;
    border-bottom: 1px solid #f0f4f8;
    background: linear-gradient(90deg, #bfcddb, #d6e4f2);
    color: #1a1a1a;
}
.panel-title h2 {
    flex: 1;
    margin-left: 7px;
    white-space: pre;
}
.panel-title button {
    width: 20px;
    height: 18px;
    margin-right: 1px;
    display: flex;
    align-items: center;
    justify-content: center;
    border: 1px solid #fff;
    border-right: 2px solid #777;
    border-bottom: 2px solid #777;
    background-color: #f0f0f0;
    color: #000;
    font: bold 10px "DejaVu Sans", sans-serif;
}
.panel-title button.synced {
    background-color: #f0f;
    color: #fff;
}
.panel-title button svg {
    width: 12px;
    height: 12px;
}
.panel-title .min {
    margin-left: 5px;
    margin-right: 0;
}
.min i {
    width: 7px;
    border-bottom: 2px solid #000;
    margin-top: 8px;
}
.max i {
    width: 11px;
    height: 10px;
    border: 1px solid #000;
    border-top-width: 2px;
}
.panel-title .close {
    margin-right: 0;
}
.panel-title .close svg {
    width: 9px;
    height: 9px;
    stroke: #000;
    stroke-width: 3;
}
.panel-info {
    height: 15px;
    flex: none;
    display: flex;
    gap: 7px;
    padding-left: 10px;
    background-color: #e0e0e0;
    color: #000080;
    font: 12px/14px "Liberation Sans", Arial, sans-serif;
    white-space: pre;
}
.panel-info b {
    font-size: 13px;
}
.chart {
    flex: 1;
    min-height: 0;
    display: flex;
    background-color: #e0e0e0;
}
.plot {
    position: relative;
    flex: 1;
    background-color: #fff;
    border-right: 1px solid #808080;
    border-bottom: 1px solid #808080;
}
.plot .bars {
    position: absolute;
    inset: 0;
    width: 100%;
    height: 100%;
    shape-rendering: crispEdges;
}
.plot small {
    position: absolute;
    left: 4px;
    bottom: 0;
    font: 9px/14px "DejaVu Sans", sans-serif;
}
.band {
    position: absolute;
    top: 0;
    bottom: 0;
    background-color: #c0ffff;
}
.legend {
    position: relative;
    font: bold 15px/23px "Comic Sans MS", "DejaVu Sans", sans-serif;
    white-space: nowrap;
}
.legend .row {
    display: flex;
    gap: 11px;
    padding: 0 19px 0 4px;
}
.legend .first {
    justify-content: flex-end;
}
.ema8 {
    color: #c000c0;
}
.ema21 {
    color: #008000;
}
.ema55 {
    color: #800000;
}
.earn {
    color: #c0ffff;
}
.level {
    position: absolute;
    left: 0;
    right: 0;
    height: 15px;
    margin-top: -7px;
    display: flex;
    align-items: center;
    gap: 3px;
    padding-right: var(--inset);
    font: bold 12px/15px "Liberation Sans", Arial, sans-serif;
}
.level::before {
    content: "";
    flex: 1;
    border-top: 1px solid;
}
.level.thick::before {
    border-top-width: 2px;
}
.red {
    color: #f00;
}
.purple {
    color: #800080;
}
.blue {
    color: #00f;
}
.marker {
    position: absolute;
    width: 17px;
    height: 17px;
    margin: -8px;
    font: 12px "Liberation Serif", serif;
}
.axis {
    position: relative;
    width: 69px;
    flex: none;
    color: #000080;
    font: 15px/23px "Comic Sans MS", "DejaVu Sans", sans-serif;
}
.axis span {
    position: absolute;
    left: 6px;
    margin-top: -11px;
}
.axis .tag {
    left: 0;
    height: 23px;
    padding: 0 1px;
    color: #fff;
    background-color: #000;
}
.axis .ema8 {
    background-color: #c000c0;
}
.axis .ema21 {
    background-color: #008000;
}
.axis .ema55 {
    background-color: #800000;
}
.months {
    position: relative;
    height: 24px;
    flex: none;
    border-right: 69px solid #e0e0e0;
    background-color: #e0e0e0;
    color: #000080;
    font: 15px/24px "Comic Sans MS", "DejaVu Sans", sans-serif;
    white-space: nowrap;
}
.months span {
    position: absolute;
    transform: translateX(-50%);
}
.scroll {
    height: 16px;
    flex: none;
    display: flex;
    padding-right: 1px;
    background-color: #f0f0f0;
}
.scroll button, .thumb {
    width: 16px;
    border: 1px solid #f8f8f8;
    border-right: 2px solid #777;
    border-bottom: 1px solid #777;
    background-color: #f0f0f0;
    font: 8px/13px "DejaVu Sans", sans-serif;
}
.scroll .thumb {
    width: 8px;
}
.track {
    flex: 1;
    background-color: #fff;
    border-top: 1px solid #999;
    border-bottom: 1px solid #999;
}
.tip {
    position: absolute;
    height: 17px;
    padding: 0 3px;
    border: 1px solid #444;
    background-color: #ffffe1;
    color: #222;
    font: 11px/15px "Open Sans", sans-serif;
}
.tip.price {
    right: 6px;
    bottom: 106px;
}
.tip.date {
    right: 320px;
    bottom: 23px;
}
```

FILE: script.js
```js
// plot area the bar data is laid out on
const W = 859;
const H = 379;

// bars: [high, body top, body bottom, low, filled]
const charts = {
    gld: {
        start: 20, step: 19, body: 14, wick: 2, inset: 40,
        scale: { price: 312, y: 78.7, unit: 41.1 },
        ticks: { from: 305, to: 313, minor: 0.5, major: 2 },
        labels: [312, 310, 308, 306],
        tags: [['ema8', 310.14], ['ema21', 309.20], ['ema55', 307.24], ['', 312.68]],
        levels: [['black', 312.31], ['red', 307.00]],
        months: [['Sep-25', 436], ['Oct-25', 835]],
        band: [104, 19],
        bars: [[179,197,217,264,0],[89,123,129,146,0],[68,113,145,152,0],[109,140,147,168,0],[31,33,90,133,0],[15,35,65,120,0],[174,217,221,259,1],[189,231,233,296,0],[144,194,197,225,0],[228,246,274,303,1],[242,266,271,290,0],[247,251,287,300,1],[264,293,355,359,1],[223,228,261,268,0],[235,248,273,283,1],[118,137,303,308,0],[126,167,175,175,0],[70,75,135,149,0],[41,50,103,130,0]],
        ema55: [361,352,344,337,326,315,313,310,305,305,302,302,304,301,300,294,290,282,275],
        ema21: [265,252,239,231,212,197,198,201,202,208,213,220,231,231,235,226,221,207,194],
        ema8: [300,262,229,209,169,140,158,175,178,200,215,231,258,252,255,229,215,184,155]
    },
    googl: {
        start: 13, step: 15, body: 11, wick: 2, inset: 25,
        scale: { price: 210, y: 45.3, unit: 8.284 },
        ticks: { from: 170, to: 215, minor: 1, major: 5 },
        labels: [210, 205, 200, 195, 190, 185, 180, 175, 170],
        tags: [['ema8', 204.90], ['ema21', 200.29], ['ema55', 190.16], ['', 207.29]],
        levels: [['blue thick', 207.05], ['red', 195.17], ['purple', 187.82], ['red', 181.89], ['red', 175.95]],
        months: [['Aug-25', 213], ['Sep-25', 528], ['Oct-25', 843]],
        dividend: [567, 368],
        bars: [[258,267,270,278,1],[260,264,276,291,0],[240,249,253,264,1],[208,210,242,244,0],[197,198,201,233,1],[190,198,210,218,1],[145,152,194,203,1],[175,184,194,201,0],[177,180,190,205,1],[162,163,191,194,0],[148,157,164,173,0],[161,163,196,203,1],[204,218,220,229,1],[167,169,208,211,0],[146,172,173,179,1],[156,160,173,180,0],[148,152,158,176,1],[106,116,151,151,0],[116,119,121,136,1],[90,100,116,124,0],[90,94,113,149,1],[91,103,115,119,0],[74,95,96,118,1],[84,93,100,108,1],[99,103,117,129,1],[117,122,134,157,1],[107,130,131,133,1],[57,77,105,118,0],[41,57,74,85,0],[63,66,68,82,1],[54,67,81,81,0]],
        ema55: [358,355,351,346,341,336,331,326,321,315,310,305,303,298,294,289,285,278,272,266,261,256,250,245,239,236,233,227,221,215,210],
        ema21: [321,316,310,301,291,285,277,268,261,252,244,238,238,231,225,220,215,205,197,188,182,175,168,162,157,154,153,146,138,131,126],
        ema8: [294,289,281,265,251,242,231,221,214,203,193,193,198,193,188,182,177,163,153,141,135,129,122,116,116,120,122,113,101,93,88]
    },
    hlt: {
        start: 13, step: 15, body: 11, wick: 2, inset: 40,
        scale: { price: 280, y: 22.3, unit: 13.7 },
        ticks: { from: 255, to: 280, minor: 1, major: 5 },
        labels: [280, 275, 270, 265, 260, 255],
        tags: [['ema8', 273.13], ['ema21', 270.32], ['ema55', 264.78], ['', 275.70]],
        levels: [['red', 275.45], ['blue thick', 259.56]],
        months: [['Aug-25', 213], ['Sep-25', 528], ['Oct-25', 843]],
        dividend: [492, 368],
        bars: [[78,87,112,137,1],[98,114,130,159,1],[106,113,123,145,1],[97,106,148,148,1],[87,106,125,150,0],[138,202,229,242,0],[141,192,208,210,0],[99,109,170,191,0],[106,116,152,159,1],[116,117,138,162,0],[77,109,115,131,1],[101,117,186,196,1],[232,232,285,330,1],[258,263,275,293,0],[263,274,295,331,1],[269,283,301,323,0],[227,235,284,308,1],[224,264,279,316,0],[249,282,285,297,0],[172,176,259,265,0],[111,120,180,193,0],[137,140,155,168,1],[144,144,191,193,1],[148,171,195,209,0],[107,135,179,183,0],[127,160,162,175,1],[148,170,177,192,0],[41,56,145,159,0],[49,56,104,120,1],[64,86,99,112,0],[55,81,89,98,0]],
        ema55: [358,350,343,336,327,323,318,310,304,299,292,288,287,287,287,287,286,286,286,282,276,272,270,265,260,258,255,247,242,237,231],
        ema21: [203,197,191,186,180,181,182,175,174,169,164,165,177,185,195,202,209,214,220,216,208,203,203,199,193,190,189,177,170,163,156],
        ema8: [109,113,115,122,120,137,149,141,143,138,133,144,175,195,217,231,243,248,255,238,211,199,198,191,179,175,175,148,138,127,117]
    },
    iqv: {
        start: 15, step: 11, body: 8, wick: 1, inset: 23,
        scale: { price: 210, y: 20.4, unit: 6.28 },
        ticks: { from: 154, to: 210, minor: 2, major: 10 },
        labels: [210, 200, 190, 180, 170, 160],
        tags: [['ema8', 188.65], ['ema21', 186.10], ['ema55', 176.99], ['', 188.48]],
        levels: [['red', 200.17], ['purple', 187.90], ['red', 177.99], ['red', 168.07], ['red', 155.80]],
        months: [['Jul-25', 145], ['Aug-25', 389], ['Sep-25', 620], ['Oct-25', 850]],
        tips: [['price', '163.35'], ['date', '29/08/2025']],
        bars: [[335,339,350,364,0],[340,350,372,377,1],[359,366,369,373,1],[353,362,367,371,1],[352,366,376,379,0],[341,344,355,364,0],[336,342,348,359,0],[333,334,347,357,1],[337,341,351,361,1],[340,347,350,365,1],[288,318,351,360,0],[303,305,314,324,0],[291,302,308,308,1],[303,314,320,330,1],[281,306,314,318,0],[292,297,322,333,1],[278,299,316,321,0],[303,312,317,326,1],[316,325,333,338,1],[320,325,350,350,1],[335,343,345,359,1],[310,314,345,347,0],[305,308,331,340,1],[323,328,342,343,1],[145,162,263,271,0],[115,119,138,170,0],[41,78,101,107,0],[77,77,89,113,1],[76,91,98,104,1],[95,97,118,133,1],[110,116,137,149,1],[140,153,173,179,1],[183,188,194,216,1],[180,191,198,208,0],[183,184,190,207,0],[185,185,225,232,1],[203,210,214,230,1],[206,209,216,223,0],[199,208,208,213,1],[167,171,205,209,0],[141,144,166,169,0],[146,150,160,167,0],[131,139,139,146,1],[123,130,135,145,0],[107,130,131,136,1],[125,133,134,144,1],[141,141,176,176,1],[126,139,163,172,0],[141,141,159,166,1],[148,157,160,169,1],[155,155,165,176,0]],
        ema55: [364,364,364,364,364,364,363,362,362,362,360,358,357,355,354,352,350,350,348,348,348,348,347,346,339,332,322,314,307,300,294,289,286,283,280,277,275,273,270,267,262,258,254,250,245,241,239,235,233,230,228],
        // the 21 EMA only comes into view at the sixth bar
        ema21: [null,null,null,null,null,380,377,374,372,371,366,360,355,352,347,345,341,339,339,339,339,338,337,337,321,303,282,265,249,237,228,223,220,218,215,215,215,215,215,210,204,199,195,189,183,178,178,174,173,172,171],
        ema8: [364,365,365,366,366,360,356,355,354,353,345,337,330,327,323,322,317,317,321,328,330,328,327,330,291,253,216,187,167,156,153,157,165,170,173,185,192,196,198,192,182,175,167,158,153,149,154,152,152,154,154]
    }
};

const colors = { ema55: '#800000', ema21: '#008000', ema8: '#c000c0' };

function rect(x, y, w, h, fill) {
    return `<rect x="${x}" y="${y}" width="${w}" height="${h}" fill="${fill}"/>`;
}

function drawBars(c) {
    return c.bars.map(([high, top, bottom, low, filled], i) => {
        const x = c.start + i * c.step;
        const left = x - Math.floor(c.body / 2);
        let out = rect(x - (c.wick > 1 ? 1 : 0), high, c.wick, low - high + 1, '#000');
        out += rect(left, top, c.body, bottom - top + 1, '#000');
        if (!filled && bottom - top > 1) {
            out += rect(left + 1, top + 1, c.body - 2, bottom - top - 1, '#fff');
        }
        return out;
    }).join('');
}

function drawEma(c, name) {
    const points = c[name]
        .map((y, i) => y === null ? '' : `${c.start + i * c.step},${y}`)
        .join(' ');
    return `<polyline points="${points}" fill="none" stroke="${colors[name]}" stroke-width="2"/>`;
}

function drawTicks(c, toY) {
    const { from, to, minor, major } = c.ticks;
    let out = '';
    for (let p = from; p <= to; p += minor) {
        const len = p % major === 0 ? 9 : 4;
        out += rect(W - len, Math.floor(toY(p)), len, 1, '#808080');
    }
    return out;
}

function draw(id, c) {
    const chart = document.getElementById(id);
    const panel = chart.parentElement;
    const plot = chart.querySelector('.plot');
    const axis = chart.querySelector('.axis');
    const toY = price => c.scale.y + (c.scale.price - price) * c.scale.unit;
    const top = y => `top: ${(y / H * 100).toFixed(2)}%`;
    const left = x => `left: ${(x / W * 100).toFixed(2)}%`;

    if (c.band) {
        plot.insertAdjacentHTML('afterbegin', `<div class="band" style="${left(c.band[0])}; width: ${(c.band[1] / W * 100).toFixed(2)}%"></div>`);
    }

    let html = `<svg class="bars" viewBox="0 0 ${W} ${H}" preserveAspectRatio="none">`;
    html += drawBars(c) + drawEma(c, 'ema55') + drawEma(c, 'ema21') + drawEma(c, 'ema8') + drawTicks(c, toY);
    html += '</svg>';
    c.levels.forEach(([cls, price]) => {
        html += `<div class="level ${cls}" style="${top(Math.floor(toY(price)))}; --inset: ${c.inset}px">${price.toFixed(2)}</div>`;
    });
    if (c.dividend) {
        html += `<svg class="marker" viewBox="0 0 17 17" style="${left(c.dividend[0])}; ${top(c.dividend[1])}">`
            + '<path d="M8.500 1l7.500 7.500-7.500 7.500L1 8.500z" fill="#fff" stroke="#000"/>'
            + '<text x="8" y="12" text-anchor="middle">D</text></svg>';
    }
    plot.insertAdjacentHTML('beforeend', html);

    // the lowest label is kept inside the axis
    axis.innerHTML = c.labels.map(p => `<span style="${top(Math.min(toY(p), H - 9))}">${p.toFixed(2)}</span>`).join('')
        + c.tags.map(([cls, p]) => `<span class="tag ${cls}" style="${top(toY(p))}">${p.toFixed(2)}</span>`).join('');

    panel.querySelector('.months').innerHTML = c.months.map(([name, x]) => `<span style="${left(x)}">${name}</span>`).join('');

    (c.tips || []).forEach(([cls, text]) => {
        panel.insertAdjacentHTML('beforeend', `<div class="tip ${cls}">${text}</div>`);
    });
}

for (const id in charts) {
    draw(id, charts[id]);
}
```
